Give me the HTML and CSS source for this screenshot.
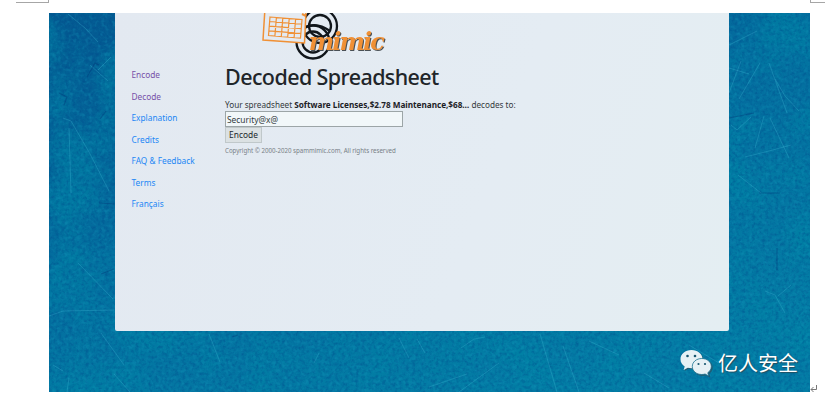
FILE: index.html
```
<!DOCTYPE html>
<html lang="en">
<head>
<meta charset="utf-8">
<title>spammimic - decoded</title>
<link rel="stylesheet" href="styles.css">
</head>
<body>
<i class="corner corner-left"></i>
<i class="corner corner-right"></i>
<div class="stage">
  <svg class="texture" viewBox="0 0 761 379" width="761" height="379" aria-hidden="true">
    <defs>
      <filter id="grain" x="0" y="0" width="100%" height="100%" color-interpolation-filters="sRGB">
        <feTurbulence type="fractalNoise" baseFrequency="0.3" numOctaves="3" seed="8"/>
        <feColorMatrix values="0 0 0 0 0  0 0 0 0 0.28  0 0 0 0 0.54  2.4 0 0 0 -1"/>
      </filter>
      <filter id="light" x="0" y="0" width="100%" height="100%" color-interpolation-filters="sRGB">
        <feTurbulence type="fractalNoise" baseFrequency="0.25" numOctaves="3" seed="21"/>
        <feColorMatrix values="0 0 0 0 0.08  0 0 0 0 0.6  0 0 0 0 0.74  0 2.4 0 0 -1.1"/>
      </filter>
      <filter id="cloud" x="0" y="0" width="100%" height="100%" color-interpolation-filters="sRGB">
        <feTurbulence type="fractalNoise" baseFrequency="0.02" numOctaves="4" seed="3"/>
        <feColorMatrix values="0 0 0 0 0  0 0 0 0 0.52  0 0 0 0 0.65  0 3 0 0 -1.2"/>
      </filter>
      <linearGradient id="base" x1="0" y1="0" x2="0.6" y2="1">
        <stop offset="0" stop-color="#045991"/>
        <stop offset="0.5" stop-color="#046e9f"/>
        <stop offset="1" stop-color="#047ca5"/>
      </linearGradient>
    </defs>
    <rect width="761" height="379" fill="url(#base)"/>
    <rect width="761" height="379" filter="url(#cloud)" opacity="0.55"/>
    <rect width="761" height="379" filter="url(#grain)" opacity="0.4"/>
    <rect width="761" height="379" filter="url(#light)" opacity="0.35"/>
    <g class="scratches">
      <path d="M19 1L36 15L49 29M41 52L59 68M14 105L22 108L40 139L60 178M20 115L22 180M29 250L64 286M0 303L14 298L65 297M52 320L75 352M65 361L81 379M20 365L18 379M4 352L14 358M49 57L62 44"/>
      <path d="M680 32L708 18M680 55L700 61M692 48L680 80M711 50L690 86M682 112L688 117L702 104M696 144L720 138L742 132M715 103L706 135M721 105L740 145M726 66L736 83L750 98M716 278L726 282L736 300M729 283L742 272M689 162L712 180M720 50L738 100"/>
      <path d="M412 335L425 326L436 324M491 321L508 379M514 333L530 379M540 328L570 342M350 325L360 345M368 326L376 340M380 374L418 361M410 379L450 350M160 321L171 349M595 360L620 375M640 332L670 350M270 340L265 350"/>
    </g>
    <g class="dark-scratches">
      <path d="M38 64L46 50L50 52M10 80L18 84L15 92M51 106L57 98M52 261L65 256M50 190L65 191M183 324L189 322M710 180L731 180M728 235L728 257M680 105L705 100"/>
    </g>
  </svg>

  <div class="card">
    <nav class="menu">
      <a class="visited">Encode</a>
      <a class="visited">Decode</a>
      <a>Explanation</a>
      <a>Credits</a>
      <a>FAQ &amp; Feedback</a>
      <a>Terms</a>
      <a>Français</a>
    </nav>
    <main class="content">
      <div class="logo">
        <svg viewBox="0 0 140 50" width="140" height="50" role="img" aria-label="mimic">
          <g class="rings">
            <circle cx="60" cy="13" r="17"/>
            <circle cx="60" cy="13" r="11"/>
            <circle cx="53" cy="29" r="16.500"/>
            <circle cx="53" cy="29" r="10.500"/>
            <path d="M44 15Q56 8 70 18"/>
          </g>
          <g class="sheet">
            <path class="paper" d="M5-5L46-2L44.500 30L3 27Z"/>
            <path class="grid" d="M10 4L42 6.500L40.500 25L8.500 22.500ZM9.600 8.500L41.600 11M9.200 13.200L41.300 15.700M8.800 17.900L40.900 20.400M16.400 4.500L14.900 23M22.800 5L21.300 23.500M29.200 5.500L27.700 24M35.600 6L34.100 24.500"/>
            <path class="tick" d="M42 1L46 3"/>
          </g>
          <text class="word" x="48.800" y="36.700" textLength="76">mimic</text>
        </svg>
      </div>
      <h1>Decoded Spreadsheet</h1>
      <p class="result">Your spreadsheet <b>Software Licenses,$2.78 Maintenance,$68…</b> decodes to:</p>
      <input class="field" type="text" value="Security@x@">
      <button class="encode">Encode</button>
      <p class="copyright">Copyright © 2000-2020 spammimic.com, All rights reserved</p>
    </main>
  </div>

  <div class="watermark">
    <svg viewBox="0 0 32 28" width="32" height="28" aria-hidden="true">
      <path d="M11.500 1C5.200 1 .5 5 .5 10.200c0 3 1.500 5.500 4.200 7.200L3.600 21l4.200-2.200c1.200.3 2.400.5 3.700.5 6.300 0 11-4 11-9.100S17.800 1 11.500 1Z"/>
      <path class="front" d="M21.800 9.500c-5.400 0-9.500 3.500-9.500 8s4.100 8 9.500 8c1.200 0 2.300-.2 3.300-.5l3.600 2-.9-3.300c2.200-1.500 3.500-3.700 3.500-6.200 0-4.500-4.100-8-9.500-8Z"/>
      <g class="eyes"><circle cx="7.500" cy="7" r="1.300"/><circle cx="15" cy="7" r="1.300"/><circle cx="18.500" cy="15" r="1.100"/><circle cx="25" cy="15" r="1.100"/></g>
    </svg>
    <span>亿人安全</span>
  </div>
</div>
<svg class="return-mark" viewBox="0 0 8 8" width="8" height="8" aria-hidden="true"><path d="M6.500 0V4.500H1M3.500 2L1 4.500L3.500 7"/></svg>
</body>
</html>
```
FILE: styles.css
```
* { box-sizing: border-box; }
body {
  margin: 0;
  width: 825px;
  height: 400px;
  position: relative;
  overflow: hidden;
  padding: 13px 0 0 49px;
  background: #fff;
  font-family: "Noto Sans", "Open Sans", sans-serif;
  color: #212529;
}
.corner {
  position: absolute;
  top: 0;
  height: 3px;
  border-bottom: 1px solid #a6a6a6;
}
.corner-left { left: 16px; width: 33px; border-right: 1px solid #a6a6a6; }
.corner-right { left: 810px; width: 15px; border-left: 1px solid #a6a6a6; }
.stage {
  position: relative;
  width: 761px;
  height: 379px;
  padding-left: 66px;
  overflow: hidden;
}
.texture { position: absolute; inset: 0; }
.scratches { fill: none; stroke: #3cb3d2; stroke-width: .8; opacity: .42; }
.dark-scratches { fill: none; stroke: #023878; stroke-width: 1.2; opacity: .4; }
.card {
  position: relative;
  display: flex;
  width: 614px;
  height: 318px;
  border-radius: 0 0 2px 2px;
  background: linear-gradient(110deg, #e3e9f1, #e4ecf3 60%, #e4eef2);
}
.menu {
  display: flex;
  flex-direction: column;
  width: 110px;
  padding: 51px 0 0 16.500px;
  font-size: 8.300px;
  line-height: 21.500px;
}
.menu a { color: #1c87f5; white-space: nowrap; }
.menu .visited { color: #7650a8; }
.content { width: 480px; }
.logo { height: 50px; padding-left: 35px; }
.logo svg { display: block; }
.rings { fill: none; stroke: #11161b; stroke-width: 2.300; }
.paper { fill: #e4eaf1; stroke: #f09035; stroke-width: 1.500; }
.grid { fill: none; stroke: #f09035; stroke-width: 1.200; }
.tick { stroke: #f09035; stroke-width: 2; }
.word {
  font: italic bold 24px "DejaVu Serif", serif;
  fill: #f09035;
  filter: drop-shadow(1.700px 1.500px 0 #4a5055);
}
h1 {
  margin: 0;
  font-size: 21.500px;
  font-weight: 500;
  line-height: 28px;
  letter-spacing: -.590px;
  white-space: nowrap;
}
.result {
  margin: 8px 0 0;
  color: #343a40;
  font-size: 8.200px;
  line-height: 12px;
  letter-spacing: -.015px;
  white-space: nowrap;
}
.result b { color: #1c2126; }
.field {
  display: block;
  width: 178px;
  height: 16px;
  margin: 0;
  padding: 0 1px;
  border: 1px solid #9ca5a7;
  background: #f1f7f9;
  color: #333b40;
  font: 8.400px "Noto Sans", sans-serif;
}
.encode {
  display: block;
  width: 37px;
  height: 16px;
  margin: 0;
  padding: 0;
  border: 1px solid #c0c8ca;
  background: #dbe1e3;
  color: #22282c;
  font: 8.400px/14px "Noto Sans", sans-serif;
}
.copyright {
  margin: 3px 0 0;
  color: #788086;
  font-size: 6.200px;
  line-height: 10px;
  letter-spacing: -.035px;
  white-space: nowrap;
}
.watermark {
  position: absolute;
  left: 631px;
  top: 334px;
  display: flex;
  align-items: center;
  gap: 6px;
  color: #fff;
  font: 20px/32px "Noto Sans CJK SC", sans-serif;
  text-shadow: 1px 1px 1px #234e60;
  white-space: nowrap;
}
.watermark svg { fill: #e6f1f5; filter: drop-shadow(1px 1px 0 #245a70); }
.watermark .front { stroke: #16708f; stroke-width: .8; }
.watermark .eyes { fill: #17566f; }
.return-mark {
  position: absolute;
  left: 810px;
  top: 385px;
  fill: none;
  stroke: #777;
  stroke-width: 1;
}
```
